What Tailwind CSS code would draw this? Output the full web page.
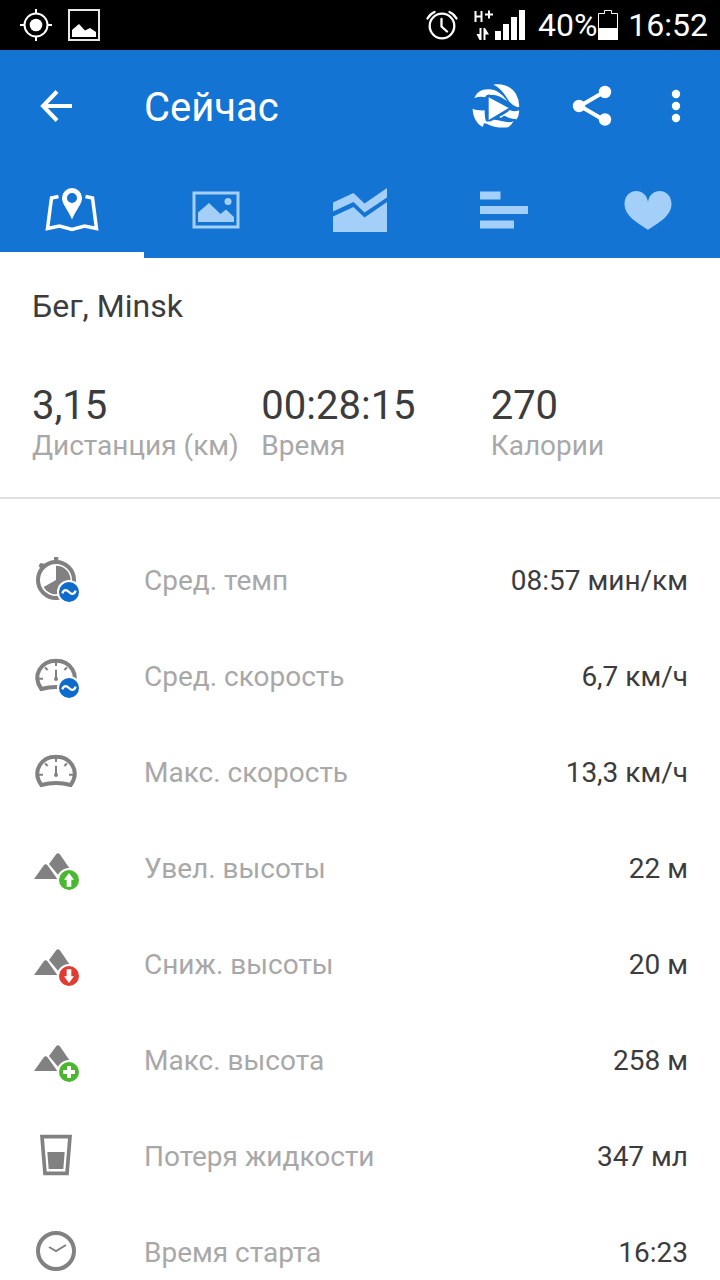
<!DOCTYPE html>
<html lang="ru">
<head>
<meta charset="utf-8">
<meta name="viewport" content="width=device-width, initial-scale=1">
<title>Сейчас</title>
<script src="https://cdn.jsdelivr.net/npm/@tailwindcss/browser@4"></script>
</head>
<body class="flex h-screen flex-col overflow-hidden bg-white font-['Roboto',sans-serif] text-[#3c3c3c]">

<div class="flex h-[50px] shrink-0 items-center bg-black pl-5 pr-3 text-white">
  <svg class="h-8 w-8" viewBox="0 0 32 32" fill="none" stroke="#fff" stroke-width="2" aria-hidden="true"><circle cx="16" cy="16" r="11.5"/><circle cx="16" cy="16" r="6.3" fill="#fff" stroke="none"/><path d="M16 0v5M16 27v5M0 16h5M27 16h5"/></svg>
  <svg class="ml-4 h-8 w-8" viewBox="0 0 32 32" aria-hidden="true"><rect x="1" y="1" width="30" height="30" fill="none" stroke="#e8e8e8" stroke-width="2"/><path fill="#fff" d="M4 28v-7L11 15l6 6.500 5-2.500 6 4v5z"/></svg>
  <svg class="ml-auto h-8 w-8" viewBox="0 0 32 32" fill="none" stroke="#fff" stroke-width="2.300" stroke-linecap="round" aria-hidden="true"><circle cx="16" cy="17" r="12.300"/><path d="M15.500 10v7.500l5.500 5M1.500 9.500Q4 5 8.500 3M23.500 3Q28 5 30.500 9.500"/></svg>
  <svg class="ml-4 h-8 w-[52px]" viewBox="0 0 52 32" fill="#fff" aria-hidden="true"><path d="M1.500 2v11M7.500 2v11M1.500 7.500h6M11 5.500h8M15 1.500v8" fill="none" stroke="#fff" stroke-width="2"/><path d="M7.500 19v12H5.500l-3-6h3v-6zM9.500 31V19h1.500l4 6.500h-3.500V31zM21 22h6v9h-6zM29 15h6v16h-6zM37 8h6v23h-6zM45 1h6v30h-6z"/></svg>
  <span class="ml-3 text-[32px] leading-[50px]">40%</span>
  <svg class="ml-px h-8 w-5" viewBox="0 0 20 32" aria-hidden="true"><path d="M.5 30.500v-26h6v-3h7v3h6v26z" fill="none" stroke="#fff"/><path d="M0 19h20v12H0z" fill="#fff"/></svg>
  <span class="ml-2.5 text-[32px] leading-[50px]">16:52</span>
</div>

<header class="shrink-0 bg-[#1474d3] text-white">
  <div class="flex h-28 items-center pl-8 pr-4">
    <button type="button" aria-label="Назад" class="flex h-12 w-12 items-center justify-center"><svg class="h-9 w-9" viewBox="0 0 36 36" fill="none" stroke="#fff" stroke-width="4"><path d="M19 3.500 5 18l14 14.500M5 18h29"/></svg></button>
    <h1 class="ml-16 grow pt-1 text-[40px] leading-12">Сейчас</h1>
    <button type="button" aria-label="Видео" class="flex h-12 w-12 items-center justify-center">
      <svg class="h-12 w-12" viewBox="18 18 144 144" fill="#fff"><path d="M82 26C112 20 138 34 150 54Q160 72 160 92L154 94Q142 90 130 77C118 58 108 38 82 26Z"/><path d="M25 67C32 48 48 39 68 40C90 40 108 54 125 76L110 67C96 58 88 57 76 57Q62 52 57 64Q40 60 25 67Z"/><path d="M68 64 128 96 68 132Z"/><path d="M20 98Q32 104 56 103Q56 127 60 136Q72 139 83 131C102 130 122 144 143 136Q136 148 126 154Q90 158 62 143L54 142 50 153C30 142 20 120 20 98Z"/><path d="M100 122Q122 112 131 102Q146 109 158 103L160 108Q148 119 138 122L114 119L104 126Z"/><path d="M114 118Q130 107 159 108Q159 119 152 130Q132 130 114 118Z"/></svg>
    </button>
    <button type="button" aria-label="Поделиться" class="ml-12 flex h-12 w-12 items-center justify-center"><svg class="h-12 w-12" viewBox="0 0 48 48" fill="#fff"><path d="M36 10 12 24l24 14" fill="none" stroke="#fff" stroke-width="4"/><circle cx="11" cy="24" r="6.200"/><circle cx="37" cy="10" r="6.200"/><circle cx="37" cy="37.500" r="6.200"/></svg></button>
    <button type="button" aria-label="Ещё" class="ml-8 flex h-12 w-14 items-center justify-center"><svg class="h-10 w-10" viewBox="0 0 40 40" fill="#fff"><circle cx="20" cy="8" r="4.200"/><circle cx="20" cy="20" r="4.200"/><circle cx="20" cy="32" r="4.200"/></svg></button>
  </div>
  <nav class="grid h-24 grid-cols-5" role="tablist">
    <button type="button" role="tab" aria-selected="true" aria-label="Карта" class="flex items-center justify-center border-b-6 border-white pt-2.5"><svg class="h-14 w-14" viewBox="0 0 56 56"><path d="M14.500 12.500 7.500 14 3.500 44.500 15.500 42 28 45.500 40.500 42 52.500 44.500 48.500 14 41.500 12.500" fill="none" stroke="#fff" stroke-width="3.500"/><path fill="#fff" fill-rule="evenodd" d="M28 4a10 10 0 0 1 10 10c0 6-5.500 11-10 21.500C23.500 25 18 20 18 14A10 10 0 0 1 28 4zm0 5a5 5 0 1 0 0 10 5 5 0 0 0 0-10z"/></svg></button>
    <button type="button" role="tab" aria-selected="false" aria-label="Фото" class="flex items-center justify-center"><svg class="h-12 w-12" viewBox="0 0 48 48" fill="#a3cff8"><rect x="2" y="7" width="44" height="34" fill="none" stroke="#a3cff8" stroke-width="3"/><path d="M6 36V26.500L17 17 28.500 28 34 23.500 42 31v5z"/><circle cx="36" cy="15.500" r="3.500"/></svg></button>
    <button type="button" role="tab" aria-selected="false" aria-label="График" class="flex items-center justify-center"><svg class="h-14 w-14" viewBox="0 0 56 56" fill="#a3cff8"><path d="M1 20.500 21.500 11 32.500 21.500 55 6v9.500L32.500 30.500 21.500 20 1 29.500zM1 34.500 21.500 25 32.500 35.500 55 20v30H1z"/></svg></button>
    <button type="button" role="tab" aria-selected="false" aria-label="Круги" class="flex items-center justify-center"><svg class="h-12 w-12" viewBox="0 0 48 48" fill="#a3cff8"><path d="M0 5.500h20.500v8H0zM0 20h48v8H0zM0 34.500h34v8H0z"/></svg></button>
    <button type="button" role="tab" aria-selected="false" aria-label="Пульс" class="flex items-center justify-center"><svg class="h-12 w-12" viewBox="0 0 48 48" fill="#a3cff8"><path d="M24 44C19 39.500.5 32 .5 18 .5 10 6 5 12 5c6.500 0 11 4 12 11 1-7 5.500-11 12-11 6 0 11.500 5 11.500 13 0 14-18.500 21.500-23.500 26z"/></svg></button>
  </nav>
</header>

<main class="min-h-0 grow overflow-hidden">
  <section class="border-b-2 border-[#e0e0e0] pt-7 pl-8 pb-[35px]">
    <h2 class="text-[32px] leading-10">Бег, Minsk</h2>
    <dl class="mt-14 grid grid-cols-3">
      <div class="flex flex-col-reverse"><dt class="text-[28px] leading-8 whitespace-nowrap text-[#a8a8a8]">Дистанция (км)</dt><dd class="text-[40px] leading-12">3,15</dd></div>
      <div class="flex flex-col-reverse"><dt class="text-[28px] leading-8 text-[#a8a8a8]">Время</dt><dd class="text-[40px] leading-12">00:28:15</dd></div>
      <div class="flex flex-col-reverse"><dt class="text-[28px] leading-8 text-[#a8a8a8]">Калории</dt><dd class="text-[40px] leading-12">270</dd></div>
    </dl>
  </section>

  <dl class="pt-[33px] pr-8 pl-5 text-[28px] leading-9 [&_dd]:pt-0.5 [&_dt]:pt-0.5">
    <div class="flex h-24 items-center">
      <svg class="h-20 w-20 shrink-0" viewBox="0 -15 240 240" aria-hidden="true"><circle cx="108" cy="105" r="54" fill="none" stroke="#818181" stroke-width="12"/><path fill="#818181" d="M102 36h13v14h-13zM60 55l10 0 8 9-12 11-10-11zM108 105V62a43 43 0 1 1-37 64z"/><circle cx="147" cy="141" r="36" fill="#fff"/><circle cx="147" cy="141" r="30" fill="#0e6bcb"/><path d="M127 145c4-12 12-12 20-4s16 8 20-4" fill="none" stroke="#fff" stroke-width="7"/></svg>
      <dt class="ml-11 text-[#a8a8a8]">Сред. темп</dt><dd class="ml-auto">08:57 мин/км</dd>
    </div>
    <div class="flex h-24 items-center">
      <svg class="h-20 w-20 shrink-0" viewBox="0 -12 240 240" aria-hidden="true"><path d="M64 147C34 104 65 62 108 62S182 104 152 147Q108 135 64 147z" fill="none" stroke="#818181" stroke-width="12"/><path d="M108 66v12M75 82l8 8M141 82l-8 8M56 116h13M147 116h13M108 89v28" fill="none" stroke="#818181" stroke-width="6"/><circle cx="108" cy="117" r="6" fill="#818181"/><circle cx="147" cy="144" r="36" fill="#fff"/><circle cx="147" cy="144" r="30" fill="#0e6bcb"/><path d="M127 148c4-12 12-12 20-4s16 8 20-4" fill="none" stroke="#fff" stroke-width="7"/></svg>
      <dt class="ml-11 text-[#a8a8a8]">Сред. скорость</dt><dd class="ml-auto">6,7 км/ч</dd>
    </div>
    <div class="flex h-24 items-center">
      <svg class="h-20 w-20 shrink-0" viewBox="0 -12 240 240" aria-hidden="true"><path d="M64 147C34 104 65 62 108 62S182 104 152 147Q108 135 64 147z" fill="none" stroke="#818181" stroke-width="12"/><path d="M108 66v12M75 82l8 8M141 82l-8 8M56 116h13M147 116h13M108 89v28" fill="none" stroke="#818181" stroke-width="6"/><circle cx="108" cy="117" r="6" fill="#818181"/></svg>
      <dt class="ml-11 text-[#a8a8a8]">Макс. скорость</dt><dd class="ml-auto">13,3 км/ч</dd>
    </div>
    <div class="flex h-24 items-center">
      <svg class="h-20 w-20 shrink-0" viewBox="0 -36 240 240" aria-hidden="true"><path fill="#818181" d="M42 117 72 75q5-5 10 0L112 117zM87 72 109 42q5-5 10 0L152 90 114 104z"/><circle cx="147" cy="120" r="36" fill="#fff"/><circle cx="147" cy="120" r="30" fill="#4ab82f"/><path fill="#fff" d="M147 99 162 119h-8v21h-14v-21h-8z"/></svg>
      <dt class="ml-11 text-[#a8a8a8]">Увел. высоты</dt><dd class="ml-auto">22 м</dd>
    </div>
    <div class="flex h-24 items-center">
      <svg class="h-20 w-20 shrink-0" viewBox="0 -36 240 240" aria-hidden="true"><path fill="#818181" d="M42 117 72 75q5-5 10 0L112 117zM87 72 109 42q5-5 10 0L152 90 114 104z"/><circle cx="147" cy="120" r="36" fill="#fff"/><circle cx="147" cy="120" r="30" fill="#e23b31"/><path fill="#fff" d="M147 141 132 121h8v-21h14v21h8z"/></svg>
      <dt class="ml-11 text-[#a8a8a8]">Сниж. высоты</dt><dd class="ml-auto">20 м</dd>
    </div>
    <div class="flex h-24 items-center">
      <svg class="h-20 w-20 shrink-0" viewBox="0 -36 240 240" aria-hidden="true"><path fill="#818181" d="M42 117 72 75q5-5 10 0L112 117zM87 72 109 42q5-5 10 0L152 90 114 104z"/><circle cx="147" cy="120" r="36" fill="#fff"/><circle cx="147" cy="120" r="30" fill="#4ab82f"/><path d="M147 102v36M129 120h36" stroke="#fff" stroke-width="12"/></svg>
      <dt class="ml-11 text-[#a8a8a8]">Макс. высота</dt><dd class="ml-auto">258 м</dd>
    </div>
    <div class="flex h-24 items-center">
      <svg class="h-20 w-20 shrink-0" viewBox="0 258 240 240" aria-hidden="true"><path d="M66 320h84l-9 110H75z" fill="none" stroke="#818181" stroke-width="11"/><path fill="#818181" d="M82 366h52l-4 51H86z"/></svg>
      <dt class="ml-11 text-[#a8a8a8]">Потеря жидкости</dt><dd class="ml-auto">347 мл</dd>
    </div>
    <div class="flex h-24 items-center">
      <svg class="h-20 w-20 shrink-0" viewBox="0 36 240 240" aria-hidden="true"><circle cx="108" cy="153" r="54" fill="none" stroke="#818181" stroke-width="12"/><path d="M87 141 108 153 138 135" fill="none" stroke="#818181" stroke-width="6"/></svg>
      <dt class="ml-11 text-[#a8a8a8]">Время старта</dt><dd class="ml-auto">16:23</dd>
    </div>
  </dl>
</main>
</body>
</html>
